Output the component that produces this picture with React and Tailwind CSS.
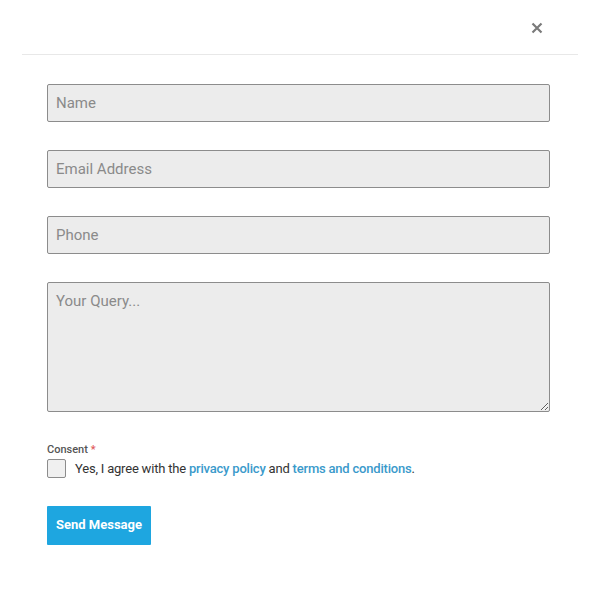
import React from "react";

export default function App() {
  const inputCls =
    "block w-[503px] h-[38px] bg-[#ececec] border border-[#8c8c8c] rounded-[2px] px-[8px] text-[15px] text-[#555] placeholder:text-[#8a8a8a] outline-none";
  return (
    <div
      className="w-[600px] h-[600px] bg-white relative"
      style={{ fontFamily: "Roboto, 'Liberation Sans', sans-serif" }}
    >
      <div className="mx-[22px] w-[556px]">
        <div className="h-[55px] border-b border-[#e8e8e8] flex items-center justify-end pr-[35px]">
          <svg width="12" height="12" viewBox="0 0 12 12" className="mt-[1px]">
            <path d="M1.5 1.5 L10.5 10.5 M10.5 1.5 L1.5 10.5" stroke="#7a7a7a" strokeWidth="2.2" strokeLinecap="butt" />
          </svg>
        </div>
        <div className="pl-[25px] pt-[29px] flex flex-col">
          <input className={inputCls} placeholder="Name" readOnly />
          <input className={inputCls + " mt-[28px]"} placeholder="Email Address" readOnly />
          <input className={inputCls + " mt-[28px]"} placeholder="Phone" readOnly />
          <textarea
            className="block mt-[28px] w-[503px] h-[130px] bg-[#ececec] border border-[#8c8c8c] rounded-[2px] px-[8px] pt-[7px] text-[15px] text-[#555] placeholder:text-[#8a8a8a] outline-none"
            placeholder="Your Query..."
            readOnly
          />
          <div className="mt-[31px] text-[11px] font-medium text-[#555] leading-[14px]">
            Consent <span className="text-[#e05a5a]">*</span>
          </div>
          <div className="mt-[2px] flex items-center">
            <span className="inline-block w-[19px] h-[19px] bg-[#f0f0f0] border border-[#8c8c8c] rounded-[2px]" />
            <span className="ml-[9px] text-[13px] tracking-[-0.2px] text-[#333]">
              Yes, I agree with the{" "}
              <span className="text-[#3a9acb] font-medium">privacy policy</span> and{" "}
              <span className="text-[#3a9acb] font-medium">terms and conditions</span>.
            </span>
          </div>
          <button className="mt-[27px] w-[104px] h-[39px] bg-[#1ea6e0] text-white text-[13px] font-bold rounded-[1px] flex items-center justify-center">
            Send Message
          </button>
        </div>
      </div>
    </div>
  );
}
